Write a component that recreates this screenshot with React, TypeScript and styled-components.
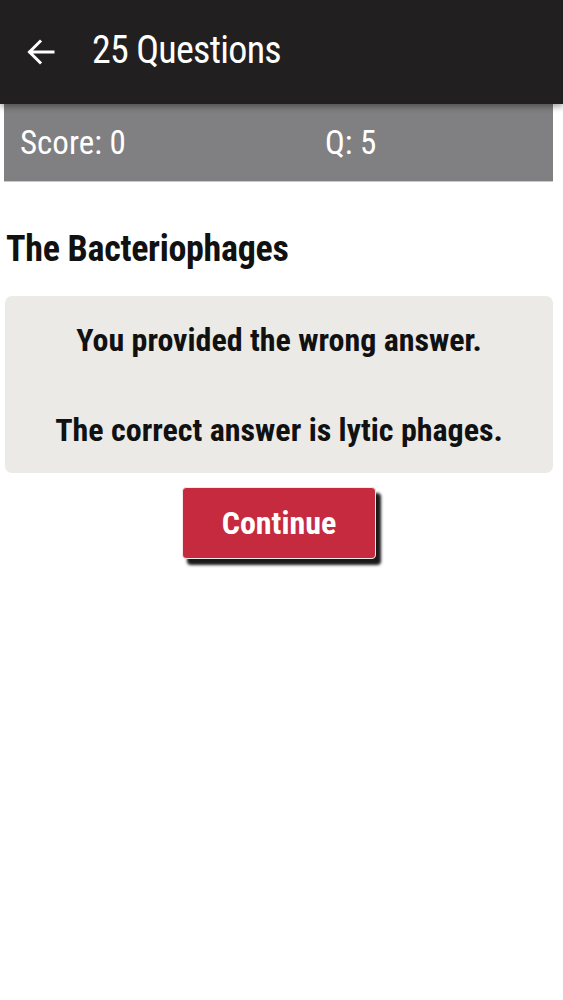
import React from "react";
import styled, { createGlobalStyle } from "styled-components";

const Global = createGlobalStyle`
  html, body { margin: 0; padding: 0; background: #ffffff; }
  body { font-family: "Roboto", "Liberation Sans", sans-serif; font-stretch: 75%; }
  #root { min-height: 1000px; }
`;

const Page = styled.div`
  width: 563px;
  min-height: 1000px;
  background: #ffffff;
  display: flex;
  flex-direction: column;
`;

const TopBar = styled.header`
  height: 104px;
  background: #221f21;
  display: flex;
  align-items: center;
  padding-left: 26px;
  gap: 36px;
  position: relative;
  z-index: 2;
  box-shadow: 0 3px 6px rgba(0, 0, 0, 0.35);
`;

const BackButton = styled.button`
  width: 30px;
  height: 30px;
  padding: 0;
  border: none;
  background: transparent;
  display: flex;
  align-items: center;
  justify-content: center;
  cursor: pointer;
`;

const Title = styled.h1`
  margin: 0 0 4px 0;
  color: #ffffff;
  font-size: 38px;
  font-weight: 400;
  letter-spacing: -0.7px;
`;

const Body = styled.main`
  display: flex;
  flex-direction: column;
  padding: 0 10px 0 5px;
`;

const ScoreBar = styled.div`
  margin-left: -1px;
  height: 78px;
  background: #807f81;
  border-bottom: 1px solid #c9c8ca;
  display: grid;
  grid-template-columns: 305px 1fr;
  align-items: center;
  padding-left: 16px;
  box-sizing: border-box;
`;

const ScoreText = styled.span`
  color: #ffffff;
  font-size: 33px;
  font-weight: 400;
`;

const Heading = styled.h2`
  margin: 47px 0 0 1px;
  font-size: 36px;
  font-weight: 700;
  color: #111111;
  line-height: 40px;
  letter-spacing: -0.3px;
`;

const FeedbackBox = styled.section`
  margin-top: 27px;
  height: 177px;
  background: #ebeae6;
  border-radius: 7px;
  display: flex;
  flex-direction: column;
  align-items: center;
  justify-content: center;
  gap: 50px;
`;

const FeedbackLine = styled.p`
  margin: 0;
  font-size: 32px;
  font-weight: 700;
  color: #111111;
  line-height: 40px;
`;

const ButtonRow = styled.div`
  display: flex;
  justify-content: center;
  margin-top: 14px;
`;

const ContinueButton = styled.button`
  width: 194px;
  height: 72px;
  border: 1px solid #f4e9ea;
  border-radius: 4px;
  background: #c62a3e;
  color: #ffffff;
  font-family: inherit;
  font-stretch: 75%;
  font-size: 32px;
  font-weight: 700;
  box-shadow: 5px 6px 3px rgba(0, 0, 0, 0.9);
  cursor: pointer;
`;

export default function App() {
  return (
    <>
      <Global />
      <Page>
        <TopBar>
          <BackButton aria-label="Back">
            <svg width="28" height="28" viewBox="0 0 28 28" fill="none">
              <path
                d="M26 14H3M13 3.5L2.5 14L13 24.5"
                stroke="#ffffff"
                strokeWidth="3"
                strokeLinecap="square"
              />
            </svg>
          </BackButton>
          <Title>25 Questions</Title>
        </TopBar>
        <Body>
          <ScoreBar>
            <ScoreText>Score: 0</ScoreText>
            <ScoreText>Q: 5</ScoreText>
          </ScoreBar>
          <Heading>The Bacteriophages</Heading>
          <FeedbackBox>
            <FeedbackLine>You provided the wrong answer.</FeedbackLine>
            <FeedbackLine>The correct answer is lytic phages.</FeedbackLine>
          </FeedbackBox>
          <ButtonRow>
            <ContinueButton>Continue</ContinueButton>
          </ButtonRow>
        </Body>
      </Page>
    </>
  );
}
